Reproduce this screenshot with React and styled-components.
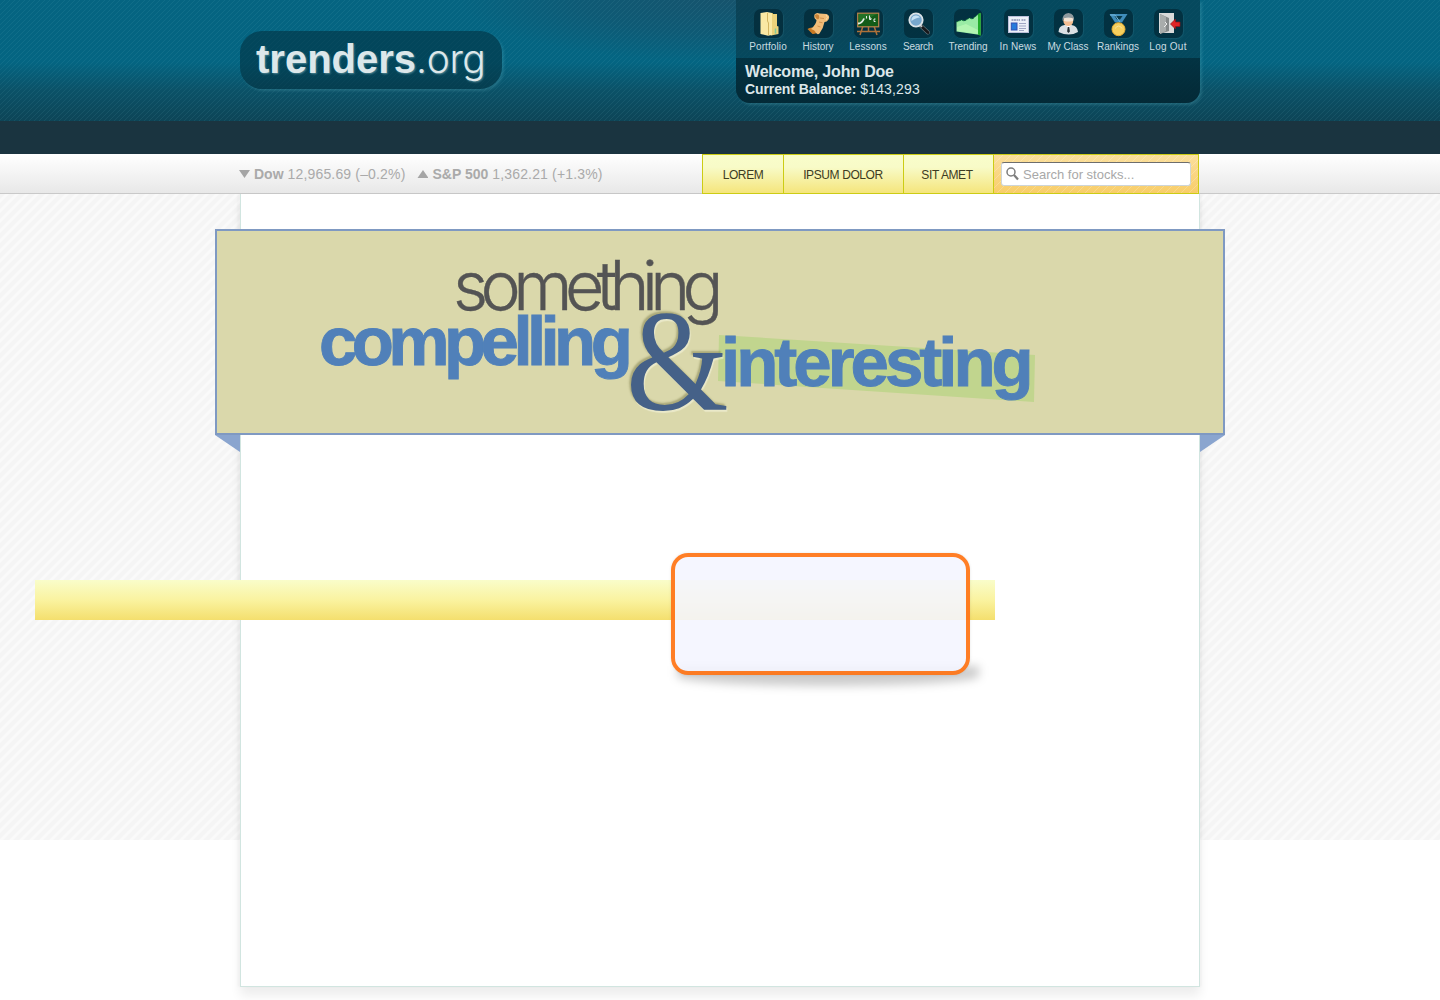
import React from "react";
import styled, { createGlobalStyle, css } from "styled-components";

const sans = `"Liberation Sans", Arial, sans-serif`;
const light = `Inter, "Liberation Sans", sans-serif`;

const GlobalStyle = createGlobalStyle`
  *, *::before, *::after { box-sizing: border-box; }
  body { margin: 0; background: #fff; font-family: ${sans}; overflow: hidden; }
`;

const Page = styled.div`
  height: 1000px;
  width: 100%;
  overflow: hidden;
`;

const Container = styled.div`
  width: 960px;
  margin: 0 auto;
  display: flex;
  justify-content: space-between;
  align-items: flex-start;
`;

const Header = styled.header`
  height: 121px;
  background:
    linear-gradient(135deg, rgba(120, 190, 200, 0.1) 10%, transparent 10% 50%, rgba(120, 190, 200, 0.1) 50% 60%, transparent 60%) 0 0 / 5px 5px,
    radial-gradient(ellipse 270px 62px at 730px 0, rgba(28, 78, 102, 0.75), rgba(24, 80, 105, 0.5) 55%, transparent),
    linear-gradient(#056481 0, #046582 62px, #0b5268 90px, #0d4557 121px);
`;

const Logo = styled.a`
  display: flex;
  align-items: baseline;
  width: 262px;
  height: 58px;
  margin-top: 31px;
  padding-left: 16px;
  border-radius: 22px;
  background: rgba(2, 46, 61, 0.55);
  box-shadow: 2px 2px 3px rgba(110, 190, 205, 0.22);
  color: #dce7ea;
  font: bold 40px/56px ${sans};
  text-shadow: 1px 1px 2px rgba(190, 230, 235, 0.4);
`;

const LogoSuffix = styled.span`
  font-family: ${light};
  font-weight: 300;
  font-size: 39px;
  letter-spacing: -0.4px;
`;

const UserPanel = styled.section`
  width: 464px;
  height: 103px;
  border-radius: 0 0 14px 14px;
  overflow: hidden;
  background: rgba(7, 56, 73, 0.62);
  box-shadow: 2px 2px 3px rgba(110, 190, 205, 0.22);
`;

const Nav = styled.nav`
  display: flex;
  height: 58px;
  padding: 9px 0 0 7px;
`;

const NavItem = styled.a`
  width: 50px;
  display: flex;
  flex-direction: column;
  align-items: center;
  gap: 2px;
  color: #c9dce1;
  font-size: 10px;
  line-height: 13px;
  letter-spacing: ${(p) => p.$spacing || 0}px;
  white-space: nowrap;
`;

const IconTile = styled.span`
  display: block;
  width: 29px;
  height: 29px;
  border-radius: 7px;
  background: rgba(1, 38, 51, 0.68);
  box-shadow: 1px 1px 1px rgba(100, 170, 185, 0.14);
`;

const Account = styled.div`
  height: 45px;
  padding: 5px 9px;
  background: linear-gradient(rgba(0, 32, 43, 0.55), rgba(0, 28, 38, 0.62));
  color: #dce7ea;
`;

const Welcome = styled.div`
  font: bold 16px/18px ${sans};
  letter-spacing: -0.17px;
`;

const Balance = styled.div`
  font: 14px/17px ${sans};
  letter-spacing: 0.15px;
  b { letter-spacing: -0.1px; }
`;

const DarkStrip = styled.div`
  height: 33px;
  background: #1a3440;
`;

const TickerBar = styled.div`
  height: 40px;
  background: linear-gradient(#fff, #e8e8e8);
  border-bottom: 1px solid #c9c9c9;
`;

const Quotes = styled.div`
  display: flex;
  gap: 12px;
  margin-left: -1px;
  color: #aaa;
  font: 14px/40px ${sans};
  letter-spacing: 0.16px;
`;

const Quote = styled.span`
  display: flex;
  align-items: center;
  gap: 4px;
  b { letter-spacing: 0; }
`;

const Arrow = styled.i`
  width: 11px;
  height: 8px;
  background: #a5a5a5;
  clip-path: ${(p) => (p.$up ? "polygon(0 100%, 50% 0, 100% 100%)" : "polygon(0 0, 100% 0, 50% 100%)")};
`;

const Tabs = styled.div`
  display: flex;
  height: 40px;
  margin-right: 1px;
  border: 1px solid #cccc14;
`;

const tabBorder = css`border-left: 1px solid #cccc14;`;

const Tab = styled.a`
  width: ${(p) => p.$width}px;
  padding-right: ${(p) => p.$trim}px;
  text-align: center;
  color: #3d3c22;
  font: 12px/40px ${sans};
  letter-spacing: -0.4px;
  background: linear-gradient(#f9fdca 0, #f8fbc8 12px, #f5e57c 100%);
  & + & { ${tabBorder} }
`;

const SearchCell = styled.div`
  width: 205px;
  padding: 7px;
  ${tabBorder}
  background:
    linear-gradient(135deg, rgba(255, 255, 255, 0.2) 12%, transparent 12% 50%, rgba(255, 255, 255, 0.2) 50% 62%, transparent 62%) 0 0 / 8px 8px,
    linear-gradient(#fbdf9d, #f8cd68);
`;

const SearchBox = styled.label`
  display: flex;
  align-items: center;
  gap: 4px;
  width: 190px;
  height: 24px;
  padding-left: 4px;
  background: #fff;
  border: 1px solid #cdd5d8;
  border-top-color: #6d6d6d;
  border-radius: 3px;
`;

const SearchInput = styled.input`
  width: 150px;
  padding: 0;
  border: 0;
  outline: 0;
  background: none;
  font: 13px ${sans};
  &::placeholder { color: #a8a8a8; opacity: 1; }
`;

const Backdrop = styled.div`
  height: 806px;
  background:
    repeating-linear-gradient(135deg, #f5f5f5 0, #f5f5f5 3px, #fafafa 4.2px, #fafafa 6px, #f5f5f5 7.07px) 0 0 / 100% 646px no-repeat;
`;

const Sheet = styled.main`
  width: 960px;
  height: 793px;
  margin: 0 auto;
  padding-top: 35px;
  background: #fff;
  border: 1px solid #d1e5e0;
  border-top: 0;
  box-shadow: -3px 0 2px rgba(0, 0, 0, 0.025), 2px 0 2px rgba(0, 0, 0, 0.025), 0 9px 10px rgba(0, 0, 0, 0.07);
`;

const Banner = styled.section`
  position: relative;
  width: 1010px;
  height: 206px;
  margin-left: -26px;
  background: #dad8ab;
  border: 2px solid #7f99c2;
`;

const Fold = styled.i`
  position: absolute;
  top: 204px;
  ${(p) => (p.$right ? "right: -2px;" : "left: -2px;")}
  width: 25px;
  height: 17px;
  background: #8aa5cf;
  clip-path: ${(p) => (p.$right ? "polygon(0 0, 100% 0, 0 100%)" : "polygon(0 0, 100% 0, 100% 100%)")};
`;

const Word = styled.span`
  position: absolute;
  left: ${(p) => p.$x}px;
  top: ${(p) => p.$y}px;
  font: bold 69px/80px ${sans};
  letter-spacing: ${(p) => p.$spacing}px;
  color: #5080b9;
  -webkit-text-stroke: 0.9px #5080b9;
  white-space: nowrap;
`;

const LightWord = styled(Word)`
  font: 300 68px/80px ${light};
  color: #545454;
  -webkit-text-stroke: 0.4px #545454;
`;

const Ampersand = styled.span`
  position: absolute;
  left: 409px;
  top: 58px;
  font: 145px/145px "Liberation Serif", serif;
  color: #456188;
  transform: scaleX(0.91);
  transform-origin: 0 0;
  text-shadow: -2px -2px 2px rgba(80, 80, 30, 0.35), 1px 2px 1px rgba(255, 255, 240, 0.45);
`;

const Highlight = styled.i`
  position: absolute;
  left: 501px;
  top: 104px;
  width: 317px;
  height: 67px;
  background: #c1d58e;
  clip-path: polygon(1px 0, 100% 20px, 316px 100%, 0 46px);
`;

const YellowBar = styled.div`
  position: relative;
  width: 960px;
  height: 40px;
  margin: 145px 0 0 -206px;
  background: linear-gradient(#f9fdca, #faf3a0 50%, #f4df6e);
`;

const Callout = styled.div`
  position: absolute;
  left: 636px;
  top: -27px;
  width: 299px;
  height: 122px;
  border: 4px solid rgba(255, 115, 20, 0.92);
  border-radius: 17px;
  background: rgba(244, 245, 255, 0.88);
  background-clip: padding-box;
  box-shadow: 0 0 3px rgba(0, 0, 0, 0.1);
`;

const CalloutShadow = styled.div`
  position: absolute;
  left: 642px;
  top: 86px;
  width: 302px;
  height: 20px;
  border-radius: 0 0 50% 50% / 0 0 10px 10px;
  background: rgba(0, 0, 0, 0.2);
  filter: blur(5px);
`;

const glyphs = {
  Portfolio: (
    <>
      <path d="M12 4h7v20l-7 2z" fill="#c9ab57" />
      <path d="M18 5h5v12l1.500.6V25l-7.500 1.500z" fill="#ecd27a" />
      <path d="M6.500 4L13 3l5 1v22l-4 .8-7.500-1.800z" fill="#fae9a4" />
      <path d="M13.500 4v8l1 2v12" stroke="#d3b661" strokeWidth="1" />
      <path d="M21.500 19.500v5" stroke="#85cf9b" strokeWidth="1.500" />
    </>
  ),
  History: (
    <>
      <path d="M3.500 20q2-2 6-1.500l4 4q-2 3-5 2.500z" fill="#c97a24" />
      <path d="M10.500 5.500q2-2.500 5-1l7 .5q4 1.500 2 5.500-1.500 2.500-4 2.500-1 6-5 11.500-2 1.500-3.500-.5-1-3-5-4Q12.500 15 12.500 11q-3-1.500-2-5.500z" fill="#f2bd78" />
      <path d="M11 6q2-1.500 4 .5 1 2-1 4-3-1-3-4.500z" fill="#c98438" />
      <path d="M16 9l4 .5M15 13l3.500.8M13.500 17l3 1" stroke="#d3934f" />
      <path d="M22 6q3 2 0 5" stroke="#fbe0a8" fill="none" />
    </>
  ),
  Lessons: (
    <>
      <path d="M9 17L6 26M20 17l3 9M3 22.500h23M14.500 17v5" stroke="#ae713a" strokeWidth="1.500" />
      <rect x="3.700" y="4.200" width="21" height="13.600" fill="#135c18" stroke="#bb854b" strokeWidth="1.200" />
      <path d="M5 5h18L5 14z" fill="#237226" />
      <path d="M4 14.500q4 0 6-5" stroke="#e6ede7" strokeWidth="1.800" fill="none" />
      <path d="M12.500 7v2.500M15.500 6.500v4h1.500V9h-1.500M21.500 10H20v2.500h1.500" stroke="#e6eee7" fill="none" />
    </>
  ),
  Search: (
    <>
      <path d="M17 17l7 6.500" stroke="#66757c" strokeWidth="4" strokeLinecap="round" />
      <path d="M17.300 17.300l6.700 6.200" stroke="#17181b" strokeWidth="2.800" strokeLinecap="round" />
      <path d="M15.500 15.500l2.500 2.300" stroke="#c0c9ce" strokeWidth="1.800" />
      <circle cx="12" cy="11" r="6.700" fill="#77a7cd" stroke="#dae2e7" strokeWidth="1.800" />
      <path d="M7.500 12q-.5-5 4-5.500 3-.3 4.500 2-4 0-8.500 3.500z" fill="#c7e2f5" />
    </>
  ),
  Trending: (
    <>
      <path d="M2.500 13l5-2 3 1 5-3 3 1 6-5 2-.7V26L2.500 22.500z" fill="#9aeba5" />
      <path d="M24 5l2.700-1.200V27L24 25.500z" fill="#22ac2a" />
      <path d="M2.500 13l5-2 3 1 5-3 3 1 6-5" stroke="#157f3f" fill="none" strokeDasharray="2 1" />
      <path d="M3 18l9-3 12 6v4L3 22z" fill="#c4fbbb" opacity=".6" />
    </>
  ),
  "In News": (
    <>
      <rect x="4.500" y="7.500" width="20" height="16" fill="#edf0f8" stroke="#bcbfda" />
      <path d="M7.500 11h8.500M17.500 11h4" stroke="#8b91b1" strokeWidth="1.600" strokeDasharray="2 .5" />
      <rect x="7.300" y="14" width="5.700" height="7" fill="#277bdb" stroke="#3251b2" />
      <path d="M15 14.500h7M15 17h7M15 19.500h7M15 21.500h5" stroke="#a0a6c4" />
    </>
  ),
  "My Class": (
    <>
      <path d="M4.500 23q0-6 6-7h7q6 1 6.500 7-9 5-19.500 0z" fill="#dbe0e4" />
      <path d="M12 16l2.500 3.500L17 16z" fill="#fff" />
      <path d="M13.800 18h1.400l.7 4.500-1.400 1.500-1.400-1.500z" fill="#252e33" />
      <ellipse cx="14.300" cy="11.500" rx="5" ry="5.500" fill="#f4bd91" />
      <path d="M8.500 12Q8 4.500 14.500 4q6 .5 5.600 8l-2-3.200q-4 1.500-7.600 0z" fill="#8f999e" />
      <path d="M10 9.500q4-2 9 0v2.500q-4 1-9 0z" fill="#f4eee5" opacity=".8" />
    </>
  ),
  Rankings: (
    <>
      <path d="M5.500 5h18l-5.500 8.500h-7z" fill="#408dbb" />
      <path d="M10.500 7h8L16 10.500h-3z" fill="#093949" />
      <path d="M6 6h5l5 7" stroke="#75b7dc" fill="none" />
      <circle cx="14.500" cy="20.200" r="6.500" fill="#f6cf5d" stroke="#e5ab32" />
      <path d="M11 19.500q4-5 7 0" stroke="#fae59c" fill="none" />
    </>
  ),
  "Log Out": (
    <>
      <path d="M5 4h15v20H5z" fill="#d9dada" />
      <path d="M6 5l9 4v13l-9 3z" fill="#858989" />
      <path d="M6 5l6 3v14l-6 3z" fill="#a9adac" />
      <path d="M11 13l2 2-3 3" stroke="#eee" fill="none" />
      <path d="M16.500 15l5-5v3H26v4.500h-4.500V20z" fill="#df2426" stroke="#8d1418" strokeWidth=".7" />
    </>
  ),
};

const navSpacing = { Portfolio: 0.1, History: 0, Lessons: 0.05, Search: -0.3, Trending: 0, "In News": 0.1, "My Class": 0, Rankings: 0.05, "Log Out": 0.25 };

const tabs = [["LOREM", 80, 0], ["IPSUM DOLOR", 120, 1], ["SIT AMET", 90, 3]];

export default function App() {
  return (
    <Page>
      <GlobalStyle />
      <Header>
        <Container>
          <Logo>trenders<LogoSuffix>.org</LogoSuffix></Logo>
          <UserPanel>
            <Nav>
              {Object.entries(glyphs).map(([name, glyph]) => (
                <NavItem key={name} $spacing={navSpacing[name]}>
                  <IconTile>
                    <svg width="29" height="29" viewBox="0 0 29 29" fill="none">{glyph}</svg>
                  </IconTile>
                  {name}
                </NavItem>
              ))}
            </Nav>
            <Account>
              <Welcome>Welcome, John Doe</Welcome>
              <Balance><b>Current Balance:</b> $143,293</Balance>
            </Account>
          </UserPanel>
        </Container>
      </Header>
      <DarkStrip />
      <TickerBar>
        <Container>
          <Quotes>
            <Quote><Arrow /><b>Dow</b>12,965.69 (–0.2%)</Quote>
            <Quote><Arrow $up /><b>S&amp;P 500</b>1,362.21 (+1.3%)</Quote>
          </Quotes>
          <Tabs>
            {tabs.map(([label, width, trim]) => <Tab key={label} $width={width} $trim={trim}>{label}</Tab>)}
            <SearchCell>
              <SearchBox>
                <svg width="13" height="14" viewBox="0 0 13 14" fill="none" stroke="#7d7d7d">
                  <circle cx="5" cy="5" r="4" strokeWidth="1.500" />
                  <path d="M8 8l4 4.500" strokeWidth="2.200" />
                </svg>
                <SearchInput placeholder="Search for stocks..." />
              </SearchBox>
            </SearchCell>
          </Tabs>
        </Container>
      </TickerBar>
      <Backdrop>
        <Sheet>
          <Banner>
            <Fold />
            <Fold $right />
            <Highlight />
            <LightWord $x={236} $y={14} $spacing={-7.6}>something</LightWord>
            <Word $x={102} $y={71} $spacing={-5.6}>compelling</Word>
            <Ampersand>&amp;</Ampersand>
            <Word $x={504} $y={92} $spacing={-4}>interesting</Word>
          </Banner>
          <YellowBar>
            <CalloutShadow />
            <Callout />
          </YellowBar>
        </Sheet>
      </Backdrop>
    </Page>
  );
}
